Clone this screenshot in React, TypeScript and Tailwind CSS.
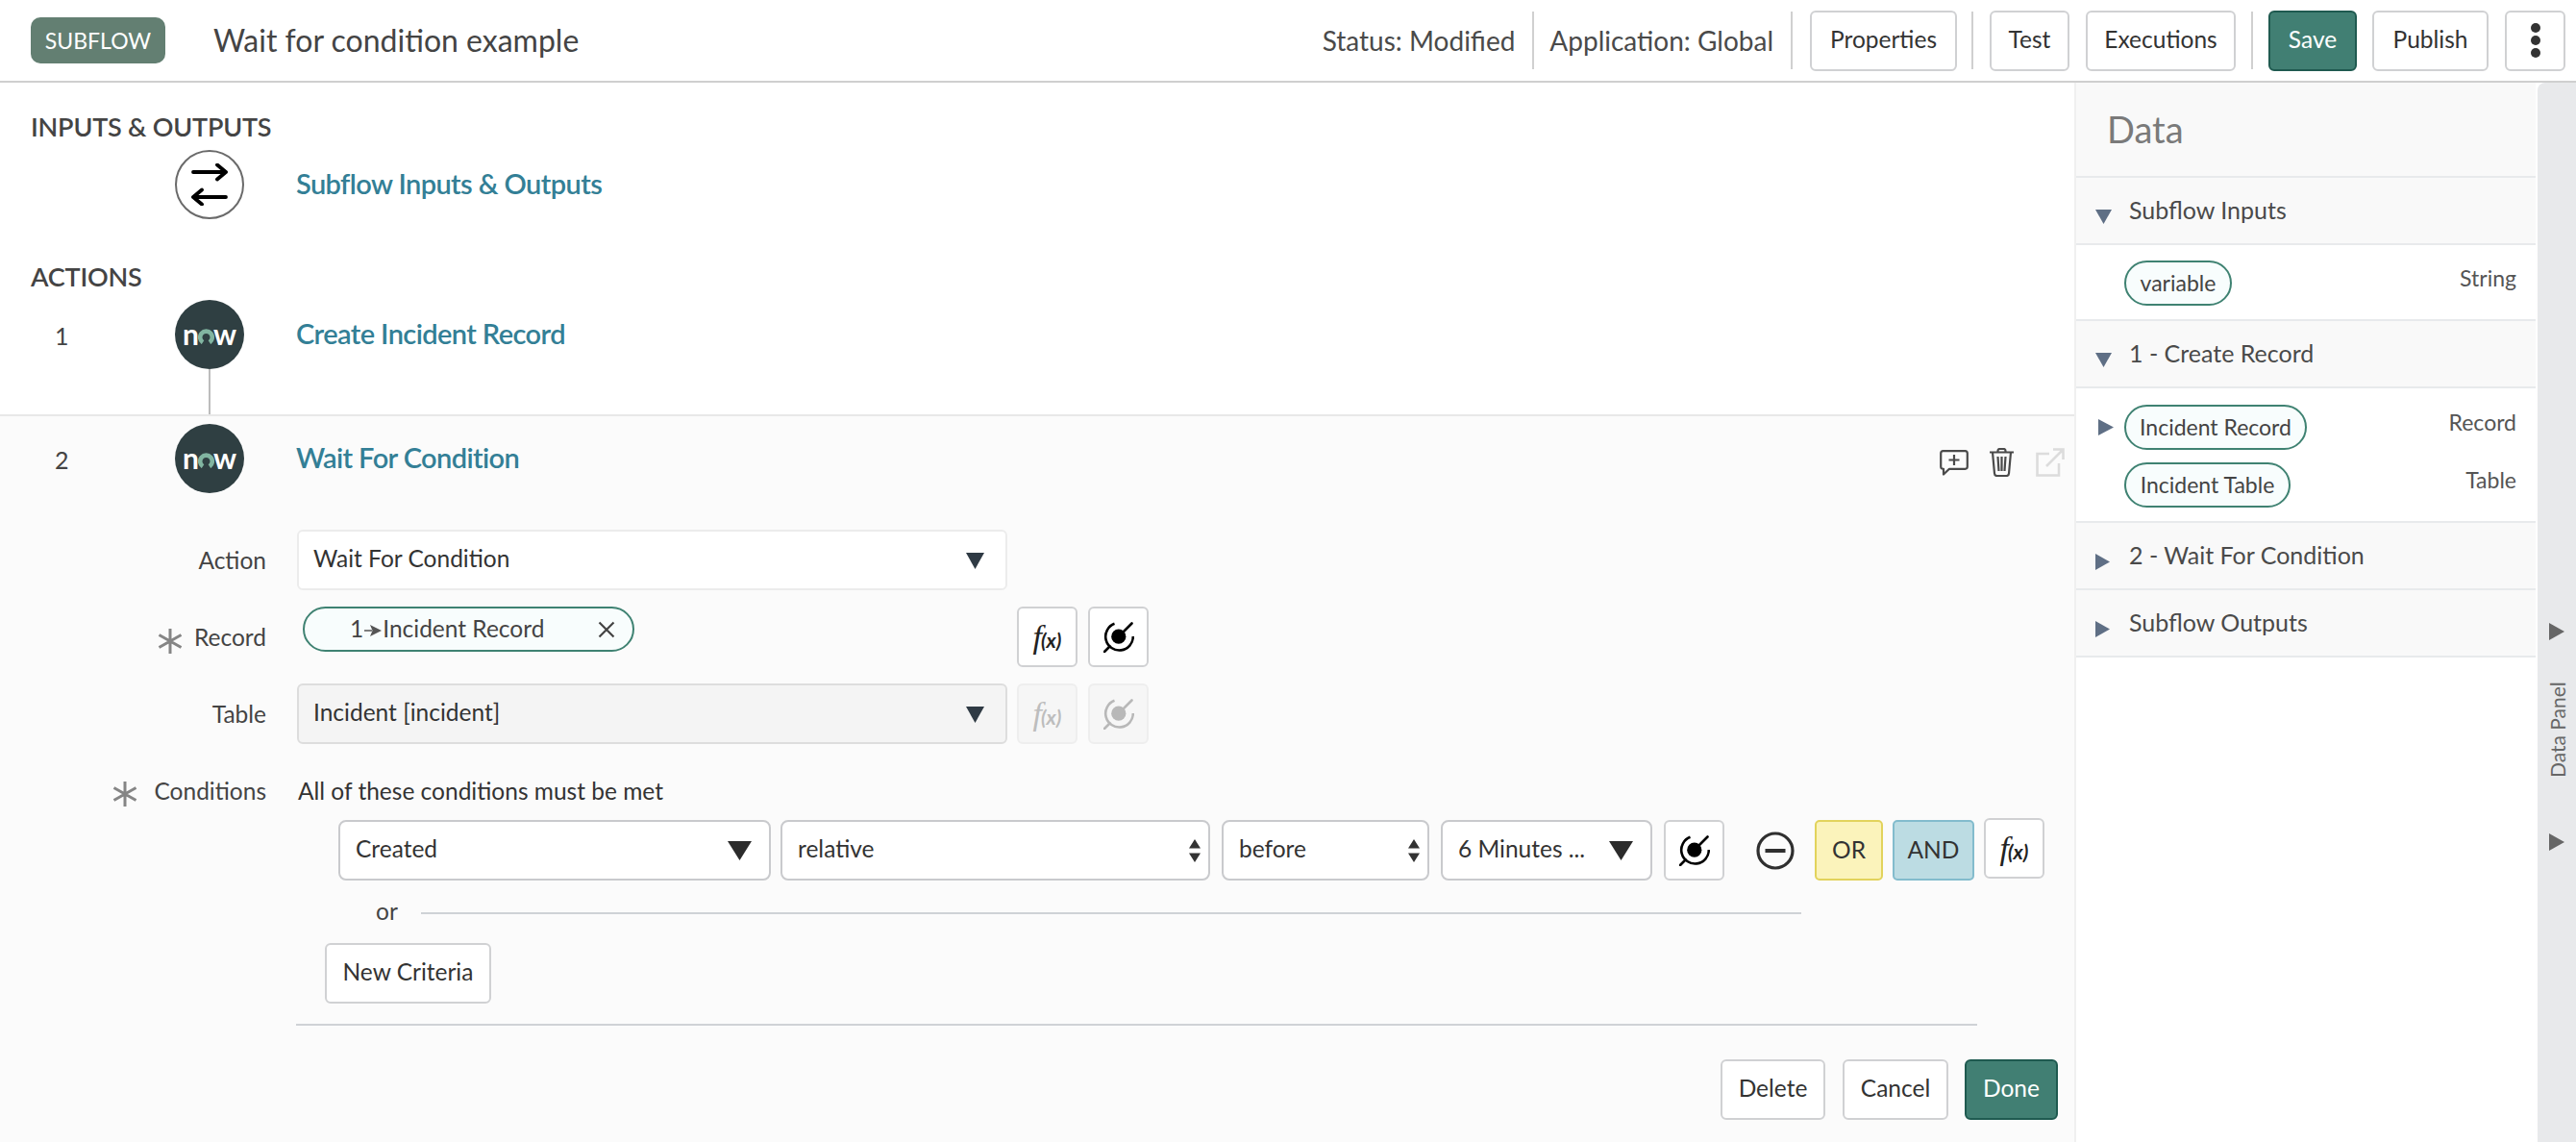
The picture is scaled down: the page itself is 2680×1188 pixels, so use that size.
import React from 'react';

const Divider = ({ className = '' }: { className?: string }) => (
  <div className={`w-[2px] h-[60px] bg-[#d0d0d0] ${className}`} />
);

const Btn = ({ label, className = '' }: { label: string; className?: string }) => (
  <button className={`h-[63px] flex items-center justify-center rounded-[6px] border-2 border-[#d0d1d3] bg-white pb-[2px] text-[24.5px] text-[#333] ${className}`}>
    {label}
  </button>
);

const PrimaryBtn = ({ label, className = '' }: { label: string; className?: string }) => (
  <button className={`h-[63px] flex items-center justify-center rounded-[6px] border-2 border-[#1f5a50] bg-[#417f73] pb-[2px] text-[24.5px] text-white ${className}`}>
    {label}
  </button>
);

const Tri = ({ dir = 'down', className = '' }: { dir?: 'down' | 'right'; className?: string }) => (
  <svg viewBox="0 0 16 16" preserveAspectRatio="none" className={`fill-current shrink-0 ${className}`}>
    {dir === 'down' ? <path d="M0 0H16L8 16Z" /> : <path d="M0 0L16 8L0 16Z" />}
  </svg>
);

const Star = ({ className = '' }: { className?: string }) => (
  <svg viewBox="0 0 26 26" className={`stroke-[#858585] shrink-0 ${className}`} strokeWidth="3" fill="none">
    <path d="M13 0V26M1.5 6.5L24.5 19.5M24.5 6.5L1.5 19.5" />
  </svg>
);

const Target = ({ muted = false }: { muted?: boolean }) => (
  <svg viewBox="0 0 32 32" className={`w-[32px] h-[32px] ${muted ? 'text-[#b8b8b8]' : 'text-black'}`} fill="none" stroke="currentColor" strokeWidth="2.6">
    <circle cx="15.8" cy="15.2" r="7.6" fill="currentColor" stroke="none" />
    <path d="M11.5 1.8A14.3 14.3 0 1 0 30.8 15" />
    <path d="M1 31L6.5 25.5M29.5 1.5L21 10" strokeLinecap="round" />
  </svg>
);

const Fx = ({ muted = false }: { muted?: boolean }) => (
  <span className={`flex items-baseline ${muted ? 'text-[#bdbdbd]' : 'text-[#222]'}`}>
    <span className="font-[Liberation_Serif,serif] italic text-[34px] leading-none">f</span>
    <span className="italic font-bold text-[21px] leading-none -ml-[1px]">(x)</span>
  </span>
);

const IconBtn = ({ children, muted = false, className = '' }: { children: React.ReactNode; muted?: boolean; className?: string }) => (
  <button className={`w-[63px] h-[63px] shrink-0 flex items-center justify-center rounded-[6px] border-2 ${muted ? 'border-[#eeeeee] bg-[#f6f6f6]' : 'border-[#d0d1d3] bg-white'} ${className}`}>
    {children}
  </button>
);

const NowBadge = () => (
  <div className="w-[72px] h-[72px] shrink-0 rounded-full bg-[#2f3f42] flex items-center justify-center pb-[3px] text-white font-bold text-[30px] leading-none">
    <span>n</span>
    <svg viewBox="0 0 17 17" className="w-[17px] h-[17px] mt-[5px] -mx-[1px]" fill="none" stroke="#81b5a1" strokeWidth="4.6">
      <path d="M5 15.2A6.3 6.3 0 1 1 12 15.2" />
    </svg>
    <span>w</span>
  </div>
);

const SwapBadge = () => (
  <div className="w-[72px] h-[72px] shrink-0 rounded-full border-2 border-[#6a6a6a] bg-white flex items-center justify-center">
    <svg viewBox="0 0 38 44" className="w-[38px] h-[44px]" fill="none" stroke="#000" strokeWidth="3.8" strokeLinecap="round" strokeLinejoin="round">
      <path d="M2 9H36M27 1.5L36 9L27 16.5" />
      <path d="M36 35H2M11 27.5L2 35L11 42.5" />
    </svg>
  </div>
);

const Step = ({ num, title, badge }: { num?: string; title: string; badge: React.ReactNode }) => (
  <div className="flex items-center">
    <div className="w-[182px] shrink-0 pl-[57px] pt-[2px] text-[25px] leading-none text-[#444]">{num}</div>
    {badge}
    <a className="ml-[54px] pb-[3px] text-[29px] font-semibold text-[#337f96] tracking-[-0.6px]">{title}</a>
  </div>
);

const FormRow = ({ label, required, children, className = '' }: { label: string; required?: boolean; children: React.ReactNode; className?: string }) => (
  <div className={`flex h-[63px] ${className}`}>
    <div className="w-[277px] shrink-0 flex items-center justify-end pt-[2px] text-[24.5px] text-[#444]">
      {required && <Star className="w-[26px] h-[26px] mr-[12px] mt-[6px]" />}
      {label}
    </div>
    {children}
  </div>
);

const Select = ({ label, disabled = false, className = '', arrowClass = 'ml-auto mr-[22px]' }: { label: string; disabled?: boolean; className?: string; arrowClass?: string }) => (
  <div className={`h-[63px] flex items-center rounded-[6px] border-2 pl-[15px] text-[24.5px] text-[#333] ${disabled ? 'bg-[#f4f4f4] border-[#dddddd]' : 'bg-white border-[#ececec]'} ${className}`}>
    <span className="-mt-[2px]">{label}</span>
    <Tri className={`w-[19px] h-[17px] mt-[2px] text-[#2f3a44] ${arrowClass}`} />
  </div>
);

const Spinner = () => (
  <svg viewBox="0 0 12 24" className="w-[12px] h-[24px] ml-auto mr-[8px] fill-[#333]">
    <path d="M6 0L12 9.5H0ZM6 24L0 14.5H12Z" />
  </svg>
);

const CondSelect = ({ label, className = '', spin = false }: { label: string; className?: string; spin?: boolean }) => (
  <div className={`h-[63px] shrink-0 flex items-center rounded-[8px] border-2 border-[#c9cacd] bg-white pl-[16px] text-[24.5px] text-[#333] ${className}`}>
    <span className="-mt-[2px]">{label}</span>
    {spin ? <Spinner /> : <Tri className="w-[25px] h-[20px] ml-auto mr-[18px] text-[#2b2b2b]" />}
  </div>
);

const Pill = ({ label, className = '' }: { label: string; className?: string }) => (
  <div className={`h-[47px] flex items-center justify-center rounded-full border-2 border-[#3f8272] bg-[#f8fdfd] text-[23px] text-[#444] ${className}`}>
    {label}
  </div>
);

const PanelHead = ({ label, open = false }: { label: string; open?: boolean }) => (
  <div className="h-[70px] flex items-center border-b-2 border-[#e8eaec] bg-[#f9f9f9] pl-[20px] text-[25px] text-[#4a4a4a]">
    <Tri dir={open ? 'down' : 'right'} className={`text-[#5f6f85] mt-[12px] ${open ? 'w-[17px] h-[15px] mr-[18px]' : 'w-[15px] h-[17px] mr-[20px]'}`} />
    {label}
  </div>
);

export default function App() {
  return (
    <div className="w-[2680px] h-[1188px] flex flex-col overflow-hidden bg-white font-[Lato,sans-serif] text-[#333]">
      {/* top bar */}
      <header className="h-[86px] shrink-0 flex items-center border-b-2 border-[#cfcfcf] pl-[32px] pr-[11px]">
        <div className="w-[140px] h-[48px] flex items-center justify-center rounded-[10px] bg-[#637f72] text-white text-[23px]">SUBFLOW</div>
        <div className="ml-[50px] text-[32px] text-[#444]">Wait for condition example</div>
        <div className="ml-auto flex items-center">
          <span className="text-[28px] text-[#4a4a4a]">Status: Modified</span>
          <Divider className="ml-[18px]" />
          <span className="ml-[16px] text-[28px] text-[#4a4a4a]">Application: Global</span>
          <Divider className="ml-[18px]" />
          <Btn label="Properties" className="w-[153px] ml-[18px]" />
          <Divider className="ml-[15px]" />
          <Btn label="Test" className="w-[83px] ml-[17px]" />
          <Btn label="Executions" className="w-[156px] ml-[17px]" />
          <Divider className="ml-[16px]" />
          <PrimaryBtn label="Save" className="w-[92px] ml-[16px]" />
          <Btn label="Publish" className="w-[121px] ml-[16px]" />
          <button className="w-[63px] h-[63px] ml-[17px] flex flex-col items-center justify-center gap-[3px] rounded-[6px] border-2 border-[#d0d1d3] bg-white">
            <span className="w-[10px] h-[10px] rounded-full bg-[#333]" />
            <span className="w-[10px] h-[10px] rounded-full bg-[#333]" />
            <span className="w-[10px] h-[10px] rounded-full bg-[#333]" />
          </button>
        </div>
      </header>

      <div className="flex flex-1 min-h-0">
        {/* flow steps */}
        <main className="w-[2160px] shrink-0 border-r-2 border-[#f0f0f0] flex flex-col">
          <div className="h-[36px] mt-[28px] ml-[32px] text-[27px] leading-[36px] font-semibold tracking-[-0.2px] text-[#444]">INPUTS &amp; OUTPUTS</div>
          <div className="mt-[6px]">
            <Step title="Subflow Inputs & Outputs" badge={<SwapBadge />} />
          </div>
          <div className="h-[36px] mt-[42px] ml-[32px] text-[27px] leading-[36px] font-semibold tracking-[-0.2px] text-[#444]">ACTIONS</div>
          <div className="mt-[6px]">
            <Step num="1" title="Create Incident Record" badge={<NowBadge />} />
          </div>
          <div className="h-[47px] w-[2px] ml-[217px] bg-[#bdbdbd]" />

          <section className="flex-1 border-t-2 border-[#e8e8e8] bg-[#fbfbfb]">
            <div className="flex items-center mt-[8px] pr-[10px]">
              <Step num="2" title="Wait For Condition" badge={<NowBadge />} />
              <div className="ml-auto mt-[8px] flex items-center">
                <svg viewBox="0 0 30 27" className="w-[30px] h-[27px]" fill="none" stroke="#4a4a4a" strokeWidth="2.2">
                  <path d="M3.5 1.2H26.5A2.4 2.4 0 0 1 28.8 3.5V17.5A2.4 2.4 0 0 1 26.5 19.8H10L4 25.5V19.8H3.5A2.4 2.4 0 0 1 1.2 17.5V3.5A2.4 2.4 0 0 1 3.5 1.2Z" strokeLinejoin="round" />
                  <path d="M15 5V16M9.5 10.5H20.5" />
                </svg>
                <svg viewBox="0 0 27 30" className="w-[27px] h-[30px] ml-[21px]" fill="none" stroke="#4a4a4a" strokeWidth="2.2" strokeLinejoin="round">
                  <path d="M1 4.5H26M9.5 4.5V3A2 2 0 0 1 11.5 1H15.5A2 2 0 0 1 17.5 3V4.5" />
                  <path d="M4 4.5L6 26.5A2.6 2.6 0 0 0 8.6 29H18.4A2.6 2.6 0 0 0 21 26.5L23 4.5" />
                  <path d="M9.5 9L10.5 24M13.5 9V24M17.5 9L16.5 24" />
                </svg>
                <svg viewBox="0 0 30 30" className="w-[30px] h-[30px] ml-[22px]" fill="none" stroke="#dcdcdc" strokeWidth="2.6">
                  <path d="M14 6H1.5V28.5H24V16" />
                  <path d="M11 19L28 2M18 1.5H28.5V12" />
                </svg>
              </div>
            </div>

            <FormRow label="Action" className="mt-[38px]">
              <Select label="Wait For Condition" className="ml-[32px] w-[739px]" />
            </FormRow>

            <FormRow label="Record" required className="mt-[17px]">
              <div className="ml-[32px] w-[739px] shrink-0 pl-[6px]">
                <div className="w-[345px] h-[47px] flex items-center rounded-full border-2 border-[#3f8272] bg-[#f8fdfd] pl-[47px] pr-[18px] text-[24.5px] text-[#444]">
                  <span>1</span>
                  <svg viewBox="0 0 18 12" className="w-[18px] h-[12px] mx-[1px] mt-[2px]" fill="#555">
                    <path d="M0 5.3H8V6.7H0ZM6 0L18 6L6 12L8.5 6Z" />
                  </svg>
                  <span>Incident Record</span>
                  <svg viewBox="0 0 18 18" className="w-[18px] h-[18px] ml-auto" fill="none" stroke="#444" strokeWidth="2.2">
                    <path d="M1.5 1.5L16.5 16.5M16.5 1.5L1.5 16.5" />
                  </svg>
                </div>
              </div>
              <IconBtn className="ml-[10px]"><Fx /></IconBtn>
              <IconBtn className="ml-[11px]"><Target /></IconBtn>
            </FormRow>

            <FormRow label="Table" className="mt-[17px]">
              <Select label="Incident [incident]" disabled className="ml-[32px] w-[739px] shrink-0" />
              <IconBtn muted className="ml-[10px]"><Fx muted /></IconBtn>
              <IconBtn muted className="ml-[11px]"><Target muted /></IconBtn>
            </FormRow>

            <div className="flex items-center h-[36px] mt-[31px]">
              <div className="w-[277px] shrink-0 flex items-center justify-end text-[24.5px] text-[#444]">
                <Star className="w-[26px] h-[26px] mr-[17px] mt-[6px]" />
                Conditions
              </div>
              <div className="ml-[33px] text-[24.5px] text-[#333]">All of these conditions must be met</div>
            </div>

            <div className="flex items-center mt-[12px] pl-[352px]">
              <CondSelect label="Created" className="w-[450px]" />
              <CondSelect label="relative" spin className="w-[447px] ml-[10px]" />
              <CondSelect label="before" spin className="w-[216px] ml-[12px]" />
              <CondSelect label="6 Minutes ..." className="w-[220px] ml-[12px]" />
              <IconBtn className="ml-[12px]"><Target /></IconBtn>
              <svg viewBox="0 0 40 40" className="w-[40px] h-[40px] ml-[33px] shrink-0" fill="none" stroke="#2f2f2f" strokeWidth="3.2">
                <circle cx="20" cy="20" r="18" />
                <path d="M9.5 20H30.5" strokeWidth="4" />
              </svg>
              <button className="w-[71px] h-[63px] ml-[21px] flex items-center justify-center rounded-[5px] border-2 border-[#e2d35c] bg-[#fbf3bb] pb-[1px] text-[24.5px] text-[#333]">OR</button>
              <button className="w-[85px] h-[63px] ml-[10px] flex items-center justify-center rounded-[5px] border-2 border-[#83bccd] bg-[#bcdce3] pb-[1px] text-[24.5px] text-[#333]">AND</button>
              <IconBtn className="ml-[10px] -mt-[4px]"><Fx /></IconBtn>
            </div>

            <div className="flex items-center h-[36px] mt-[16px] pl-[391px] pr-[284px]">
              <span className="-mt-[3px] text-[24.5px] text-[#444]">or</span>
              <div className="flex-1 h-[2px] ml-[24px] bg-[#cfd2d6]" />
            </div>

            <Btn label="New Criteria" className="w-[173px] ml-[338px] mt-[13px]" />

            <div className="h-[2px] w-[1749px] ml-[308px] mt-[21px] bg-[#cfd2d6]" />

            <div className="flex justify-end mt-[35px] pr-[17px]">
              <Btn label="Delete" className="w-[109px]" />
              <Btn label="Cancel" className="w-[110px] ml-[18px]" />
              <PrimaryBtn label="Done" className="w-[97px] ml-[17px]" />
            </div>
          </section>
        </main>

        {/* data panel */}
        <aside className="w-[478px] shrink-0 flex flex-col">
          <div className="h-[99px] flex items-center border-b-2 border-[#e8eaec] bg-[#f9f9f9] pl-[32px] text-[38px] text-[#7a7a7a]">Data</div>
          <PanelHead label="Subflow Inputs" open />
          <div className="h-[79px] border-b-2 border-[#e8eaec] flex justify-between pl-[50px] pr-[20px] pt-[16px]">
            <Pill label="variable" className="w-[112px]" />
            <span className="text-[23px] leading-[36px] text-[#555]">String</span>
          </div>
          <PanelHead label="1 - Create Record" open />
          <div className="h-[140px] border-b-2 border-[#e8eaec] flex flex-col gap-[13px] pt-[17px] pr-[20px]">
            <div className="flex items-start">
              <Tri dir="right" className="w-[16px] h-[17px] ml-[23px] mr-[11px] mt-[15px] text-[#5f6f85]" />
              <Pill label="Incident Record" className="w-[190px]" />
              <span className="ml-auto text-[23px] leading-[36px] text-[#555]">Record</span>
            </div>
            <div className="flex items-start pl-[50px]">
              <Pill label="Incident Table" className="w-[173px]" />
              <span className="ml-auto text-[23px] leading-[36px] text-[#555]">Table</span>
            </div>
          </div>
          <PanelHead label="2 - Wait For Condition" />
          <PanelHead label="Subflow Outputs" />
        </aside>

        {/* collapsed rail */}
        <div className="w-[40px] ml-[2px] shrink-0 rounded-tl-[8px] bg-[#e8e9eb] flex flex-col items-center pt-[562px]">
          <Tri dir="right" className="w-[16px] h-[18px] text-[#666]" />
          <span className="mt-[41px] h-[104px] whitespace-nowrap [writing-mode:vertical-rl] rotate-180 text-center text-[21px] leading-none text-[#666]">Data Panel</span>
          <Tri dir="right" className="w-[16px] h-[18px] mt-[56px] text-[#666]" />
        </div>
      </div>
    </div>
  );
}
